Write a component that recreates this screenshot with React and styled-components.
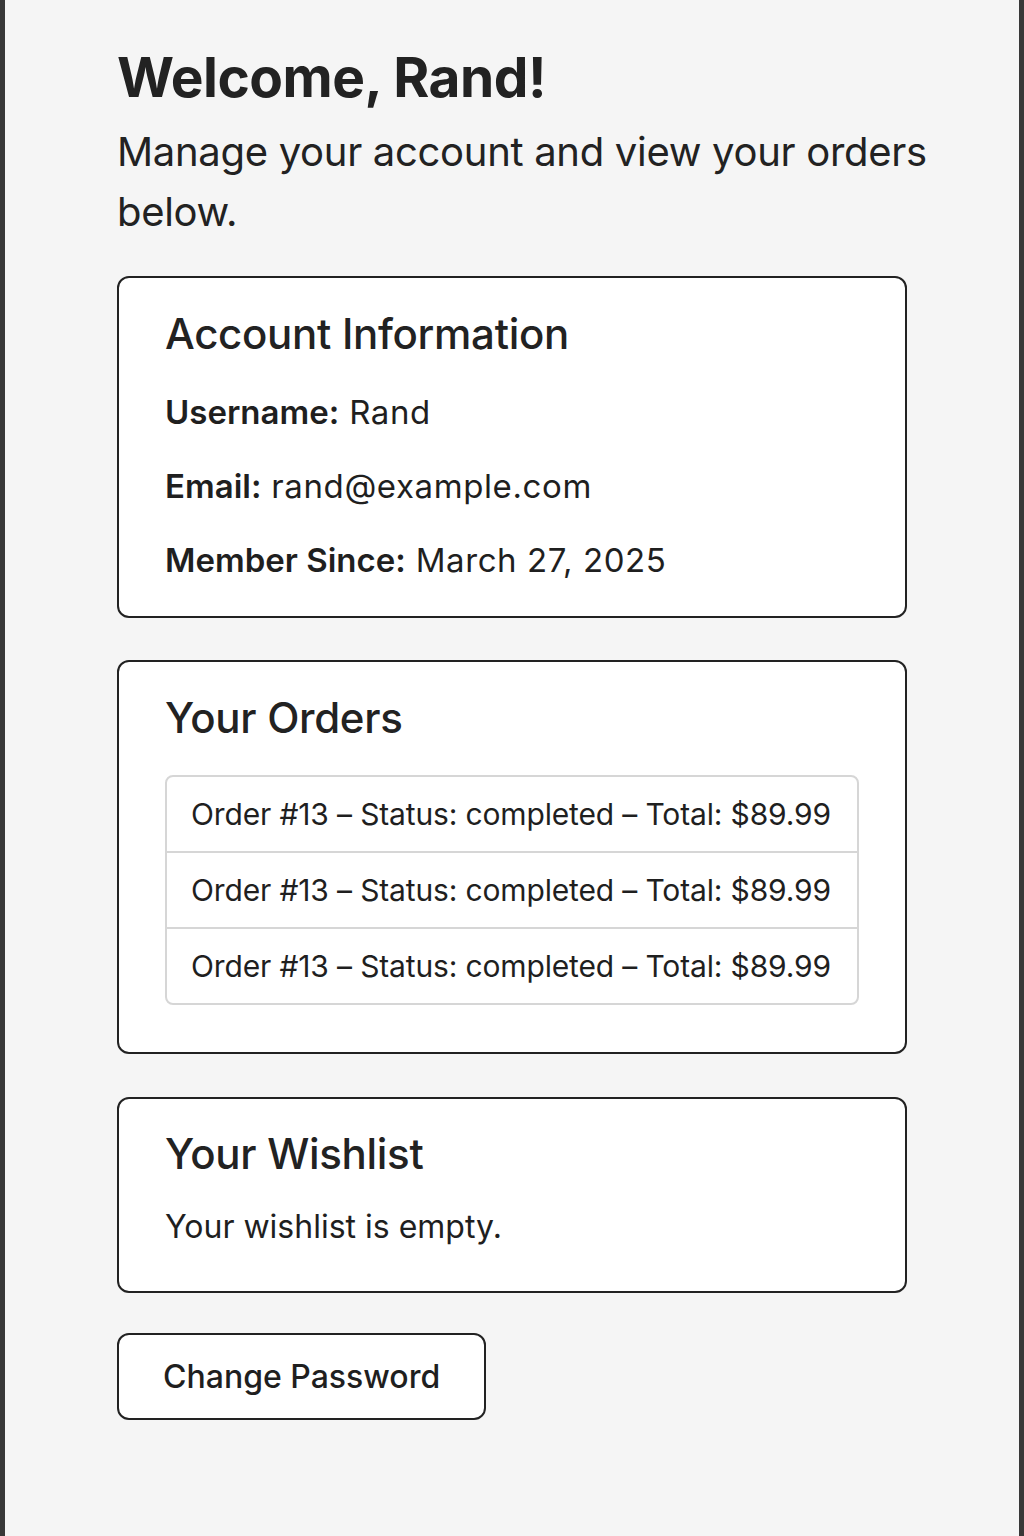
import React from 'react';
import styled, { createGlobalStyle } from 'styled-components';

const GlobalStyle = createGlobalStyle`
  html, body {
    margin: 0;
    padding: 0;
    background: #f5f5f5;
  }
  body {
    font-family: Inter, "Noto Sans", "Liberation Sans", sans-serif;
    color: #1f1f1f;
  }
`;

// account data shown on the page
const user = {
  username: 'Rand',
  email: 'rand@example.com',
  memberSince: 'March 27, 2025',
};

const orders = [
  { id: 13, status: 'completed', total: '89.99' },
  { id: 13, status: 'completed', total: '89.99' },
  { id: 13, status: 'completed', total: '89.99' },
];

export default function App() {
  return (
    <>
      <GlobalStyle />
      <Page>
        <Main>
          <Heading>Welcome, {user.username}!</Heading>
          <Intro>Manage your account and view your orders below.</Intro>

          <Card $bottom={33} $space={42}>
            <CardTitle>Account Information</CardTitle>
            <InfoList>
              <InfoRow><Label>Username:</Label> {user.username}</InfoRow>
              <InfoRow><Label>Email:</Label> {user.email}</InfoRow>
              <InfoRow><Label>Member Since:</Label> {user.memberSince}</InfoRow>
            </InfoList>
          </Card>

          <Card $bottom={47}>
            <CardTitle $gap={32}>Your Orders</CardTitle>
            <OrderList>
              {orders.map((order, key) => (
                <OrderItem key={key}>
                  Order #{order.id} – Status: {order.status} – Total: ${order.total}
                </OrderItem>
              ))}
            </OrderList>
          </Card>

          <Card $bottom={42} $space={40} $top={29}>
            <CardTitle $gap={25}>Your Wishlist</CardTitle>
            <EmptyText>Your wishlist is empty.</EmptyText>
          </Card>

          <Button type="button">Change Password</Button>
        </Main>
      </Page>
    </>
  );
}

// styled Component

const Page = styled.div`
  min-height: 1536px;
  box-sizing: border-box;
  border-left: 5px solid #383838;
  border-right: 5px solid #383838;
  background: #f5f5f5;
  padding: 44px 0 60px 112px;
`;

const Main = styled.main`
  width: 860px;
  display: flex;
  flex-direction: column;
  align-items: flex-start;
`;

const Heading = styled.h1`
  margin: 0;
  font-size: 55px;
  line-height: 66px;
  font-weight: 700;
  color: #222;
  letter-spacing: -0.5px;
`;

const Intro = styled.p`
  margin: 12px 0 34px;
  font-size: 40px;
  line-height: 60px;
  font-weight: 400;
  color: #222;
  letter-spacing: -0.3px;
`;

const Card = styled.section`
  width: 790px;
  box-sizing: border-box;
  background: #fff;
  border: 2px solid #222;
  border-radius: 12px;
  padding: ${(p) => p.$top || 30}px 46px ${(p) => p.$bottom || 32}px;
  margin-bottom: ${(p) => p.$space || 43}px;
`;

const CardTitle = styled.h2`
  margin: 0 0 ${(p) => p.$gap || 30}px;
  font-size: 42px;
  line-height: 51px;
  font-weight: 500;
  color: #222;
  letter-spacing: -0.3px;
`;

const InfoList = styled.div`
  display: flex;
  flex-direction: column;
  gap: 28px;
`;

const InfoRow = styled.p`
  margin: 0;
  font-size: 33px;
  line-height: 46px;
  color: #1f1f1f;
  letter-spacing: 0.6px;
`;

const Label = styled.strong`
  font-weight: 600;
  letter-spacing: 0;
`;

const OrderList = styled.ul`
  list-style: none;
  margin: 0;
  padding: 0;
  border: 2px solid #d6d6d6;
  border-radius: 8px;
`;

const OrderItem = styled.li`
  font-size: 30px;
  line-height: 42px;
  padding: 16px 24px;
  color: #1f1f1f;
  white-space: nowrap;
  letter-spacing: -0.15px;

  & + & {
    border-top: 2px solid #d6d6d6;
  }
`;

const EmptyText = styled.p`
  margin: 0;
  font-size: 32px;
  line-height: 45px;
  color: #1f1f1f;
`;

const Button = styled.button`
  font-family: inherit;
  font-size: 32px;
  line-height: 39px;
  font-weight: 500;
  color: #1f1f1f;
  background: #fff;
  border: 2px solid #222;
  border-radius: 12px;
  padding: 22px 44px;
  cursor: pointer;
`;
